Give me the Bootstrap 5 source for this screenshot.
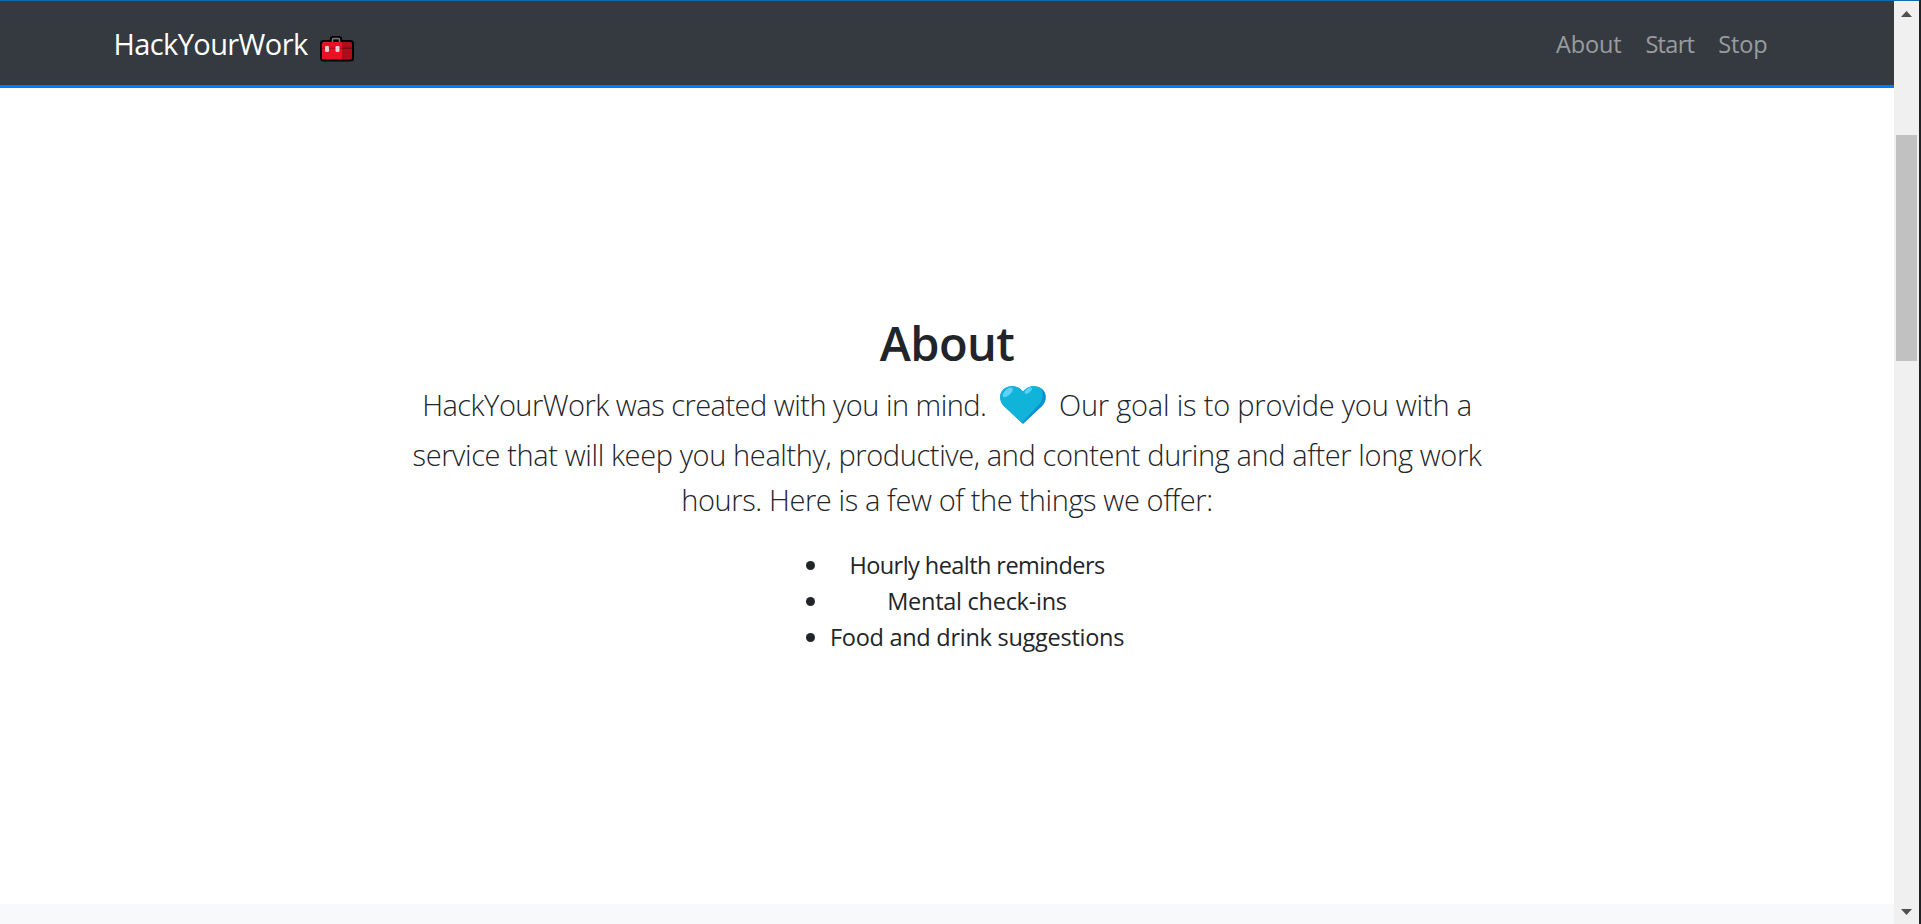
<!DOCTYPE html>
<html lang="en">
<head>
  <meta charset="UTF-8" />
  <title>HackYourWork</title>
  <meta name="viewport" content="width=device-width, initial-scale=1" />
  <link href="https://cdn.jsdelivr.net/npm/bootstrap@5.3.2/dist/css/bootstrap.min.css" rel="stylesheet">
  <style>
    body { font-family: "Open Sans", "Noto Sans", sans-serif; color: #212529; background: #f8f9fa; overflow: hidden; }

    /* navbar */
    .site-nav { --bs-navbar-nav-link-padding-x: 12px; height: 87px; padding: 2px 0 0; background: #343a40; border-bottom: 3px solid #007bff; }
    .site-inner { width: 1710px; padding: 0 22.5px 0 21.5px; }
    .site-nav .navbar-brand { font-size: 29px; letter-spacing: -.6px; color: #fff; padding: 0; margin: 0; }
    .site-nav .nav-link { font-size: 23.5px; letter-spacing: -.13px; padding-top: 10px; color: rgba(255, 255, 255, .5); }
    .site-nav .nav-link:nth-child(2) { letter-spacing: -.7px; }
    .toolbox { margin: 9px 0 0 12px; }
    .top-edge { height: 1px; background: #0f6ca8; }

    /* about section */
    .about { height: 816px; padding-top: 2px; }
    .about h2 { font-size: 47px; line-height: 57.6px; font-weight: 600; letter-spacing: -.6px; margin-bottom: 10px; }
    .intro { font-size: 29px; line-height: 45px; font-weight: 300; letter-spacing: -.39px; white-space: nowrap; margin-bottom: 25px; }
    .intro .created { letter-spacing: -.52px; }
    .intro .goal { letter-spacing: -.21px; }
    .heart { vertical-align: -16px; margin: 0 12.5px 8px 14px; }
    .offers { font-size: 23.5px; line-height: 36px; letter-spacing: -.27px; padding-left: 60px; margin-bottom: 24px; list-style: none; }
    .offers li { position: relative; }
    .offers li:first-child { letter-spacing: -.56px; }
    .offers li::before { content: ""; position: absolute; left: -23.5px; top: 14px; width: 9px; height: 9px; border-radius: 50%; background: #212529; }

    /* scrollbar */
    .track { width: 25px; background: #f0f0f0; padding: 10px 0 9px; }
    .thumb { width: 21px; height: 226px; margin-top: 118px; background: #c1c1c1; }
    .window-edge { width: 2px; background: #202027; }
  </style>
</head>
<body>

  <div class="d-flex vh-100">
    <div class="flex-grow-1 d-flex flex-column">
      <div class="top-edge"></div>
      <div class="d-flex flex-grow-1">

        <main class="flex-grow-1">
          <nav class="site-nav navbar navbar-expand">
            <div class="site-inner d-flex mx-auto justify-content-between align-items-center">
              <a class="navbar-brand d-flex align-items-center">HackYourWork
                <svg class="toolbox" width="34" height="26" viewBox="0 0 34 26">
                  <path d="M11.500 6V3q0-1.300 1.300-1.300h6.400q1.300 0 1.300 1.300v3" fill="none" stroke="#000" stroke-width="3.400" />
                  <rect x="1" y="5" width="32" height="19.500" rx="2.500" fill="#e81224" />
                  <path d="M22 6h10v17H22z" fill="#b00d1b" />
                  <path d="M2 12.200h20" stroke="#a30c19" stroke-width="1" />
                  <path d="M22 12.200h10" stroke="#5f0a10" stroke-width="1" />
                  <rect x="1" y="5" width="32" height="19.500" rx="2.500" fill="none" stroke="#000" stroke-width="2" />
                  <path d="M12.500 6V3.400q0-.9.900-.9h5.200q.9 0 .9.900V6" fill="none" stroke="#777" stroke-width="1.600" />
                  <rect x="5" y="10" width="4" height="6" rx="1.300" fill="#d9d0d0" />
                  <rect x="15.500" y="10" width="4" height="6" rx="1.300" fill="#d9d0d0" />
                </svg>
              </a>
              <div class="navbar-nav">
                <a class="nav-link">About</a>
                <a class="nav-link">Start</a>
                <a class="nav-link">Stop</a>
              </div>
            </div>
          </nav>

          <section class="about bg-white d-flex flex-column justify-content-center align-items-center text-center">
            <h2>About</h2>
            <p class="intro">
              <span class="created">HackYourWork was created with you in mind.</span><svg class="heart" width="46" height="38" viewBox="0 0 46 38">
                <defs>
                  <clipPath id="heartShape"><path d="M23 38 3.800 20C-1.200 15-.8 7.300 3.500 3.300 8.500-1.200 18-1.200 23 5.800 28-1.200 37.500-1.200 42.500 3.300c4.300 4 4.700 11.700-.3 16.700z" /></clipPath>
                </defs>
                <g clip-path="url(#heartShape)">
                  <path d="M0 0h46v38H0z" fill="#0f8fd3" />
                  <path d="M0 0H40Q46 11 38.500 19L21 38H0z" fill="#10b4d8" />
                </g>
                <ellipse cx="7.800" cy="6.300" rx="6.200" ry="3" transform="rotate(-42 7.800 6.300)" fill="#5fd0fb" />
                <ellipse cx="28.300" cy="4.600" rx="4.300" ry="2" transform="rotate(-40 28.300 4.600)" fill="#5fd0fb" />
              </svg><span class="goal">Our goal is to provide you with a</span><br>
              service that will keep you healthy, productive, and content during and after long work<br>
              hours. Here is a few of the things we offer:
            </p>
            <ul class="offers">
              <li>Hourly health reminders</li>
              <li>Mental check-ins</li>
              <li>Food and drink suggestions</li>
            </ul>
          </section>
        </main>

        <div class="track d-flex flex-column align-items-center">
          <svg width="11" height="6" viewBox="0 0 11 6"><path d="M0 6 5.500 0 11 6z" fill="#505050" /></svg>
          <div class="thumb"></div>
          <svg class="mt-auto" width="11" height="6" viewBox="0 0 11 6"><path d="M0 0h11L5.500 6z" fill="#505050" /></svg>
        </div>
      </div>
    </div>
    <div class="window-edge"></div>
  </div>

  <script src="https://cdn.jsdelivr.net/npm/bootstrap@5.3.2/dist/js/bootstrap.bundle.min.js"></script>
</body>
</html>
